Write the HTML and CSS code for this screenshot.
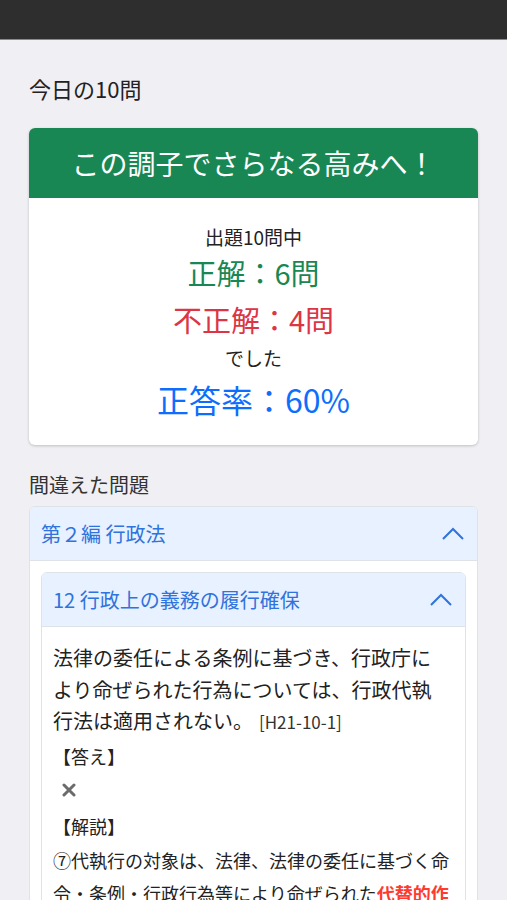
FILE: index.html
```html
<!DOCTYPE html>
<html lang="ja">
<head>
<meta charset="utf-8">
<title>今日の10問</title>
<link rel="stylesheet" href="styles.css">
</head>
<body>
<div class="screen">
<div class="topbar"></div>
<main class="page">
  <h1 class="title">今日の10問</h1>
  <section class="result-card">
    <div class="result-head">この調子でさらなる高みへ！</div>
    <div class="result-body">
      <div class="line-q">出題10問中</div>
      <div class="line-ok">正解：6問</div>
      <div class="line-ng">不正解：4問</div>
      <div class="line-deshita">でした</div>
      <div class="line-rate">正答率：60%</div>
    </div>
  </section>
  <h2 class="subtitle">間違えた問題</h2>
  <section class="acc">
    <div class="acc-head">
      <span>第２編 行政法</span>
      <svg class="chev" viewBox="0 0 22 13" width="22" height="13"><path d="M1 12 L11 2 L21 12" fill="none" stroke="#2f73dc" stroke-width="2"/></svg>
    </div>
    <div class="acc-body">
      <section class="acc inner">
        <div class="acc-head">
          <span>12 行政上の義務の履行確保</span>
          <svg class="chev" viewBox="0 0 22 13" width="22" height="13"><path d="M1 12 L11 2 L21 12" fill="none" stroke="#2f73dc" stroke-width="2"/></svg>
        </div>
        <div class="q-body">
          <p class="question">法律の委任による条例に基づき、行政庁により命ぜられた行為については、行政代執行法は適用されない。<span class="qid">[H21-10-1]</span></p>
          <div class="label">【答え】</div>
          <div class="answer"><svg viewBox="0 0 14 14" width="14" height="14"><path d="M2 2 L12 12 M12 2 L2 12" stroke="#6b6b6b" stroke-width="3" stroke-linecap="round"/></svg></div>
          <div class="label label-exp">【解説】</div>
          <p class="explain">⑦代執行の対象は、法律、法律の委任に基づく命令・条例・行政行為等により命ぜられた<strong class="hl">代替的作</strong></p>
        </div>
      </section>
    </div>
  </section>
</main>
</div>
</body>
</html>
```

FILE: styles.css
```css
* { box-sizing: border-box; }
html, body { margin: 0; padding: 0; }
body {
  background: #efeff4;
  font-family: "Noto Sans CJK JP", "Noto Sans", sans-serif;
  color: #222;
}
.screen {
  height: 900px;
  overflow: hidden;
}
.topbar {
  height: 40px;
  background: #2e2e2e;
  border-bottom: 1px solid #8a8a8a;
}
.page {
  padding: 0 29px 0 29px;
}
.title {
  margin: 34px 0 0 0;
  font-size: 22px;
  line-height: 28px;
  font-weight: 400;
  color: #222;
}
.result-card {
  margin-top: 26px;
  background: #fff;
  border-radius: 6px;
  overflow: hidden;
  box-shadow: 0 1px 3px rgba(0,0,0,0.2);
}
.result-head {
  height: 70px;
  background: #198754;
  color: #fff;
  font-size: 28px;
  line-height: 70px;
  text-align: center;
}
.result-body {
  padding: 27px 0 20px;
  text-align: center;
}
.line-q { font-size: 19px; line-height: 24px; color: #222; }
.line-ok { font-size: 29px; line-height: 46px; color: #198754; }
.line-ng { font-size: 29px; line-height: 48px; color: #dc3545; }
.line-deshita { font-size: 19px; line-height: 30px; color: #222; }
.line-rate { font-size: 32px; line-height: 52px; color: #0d6efd; }
.subtitle {
  margin: 27px 0 8px;
  font-size: 20px;
  line-height: 26px;
  font-weight: 400;
  color: #333;
}
.acc {
  background: #fff;
  border: 1px solid #dfe3e8;
  border-radius: 6px;
  overflow: hidden;
}
.acc-head {
  height: 54px;
  background: #e7f1ff;
  border-bottom: 1px solid #dfe3e8;
  color: #2f73dc;
  font-size: 20px;
  display: flex;
  align-items: center;
  justify-content: space-between;
  padding: 0 13px 0 11px;
}
.acc-body {
  padding: 11px 11px 0;
}
.q-body {
  padding: 15px 14px 0 11px;
}
.question {
  margin: 0;
  padding-right: 10px;
  font-size: 20px;
  line-height: 31.5px;
  color: #222;
}
.qid {
  font-size: 17px;
  line-height: 1;
  margin-left: 6px;
  color: #333;
}
.label {
  font-size: 18px;
  line-height: 32px;
  margin-top: 3px;
  color: #222;
}
.answer {
  height: 36px;
  display: flex;
  align-items: center;
  padding-left: 9px;
}
.label-exp {
  margin-top: 0;
  line-height: 36px;
}
.explain {
  margin: 0;
  font-size: 18px;
  line-height: 33px;
  color: #222;
}
.hl {
  color: #ff3b30;
  font-weight: 700;
}
```
